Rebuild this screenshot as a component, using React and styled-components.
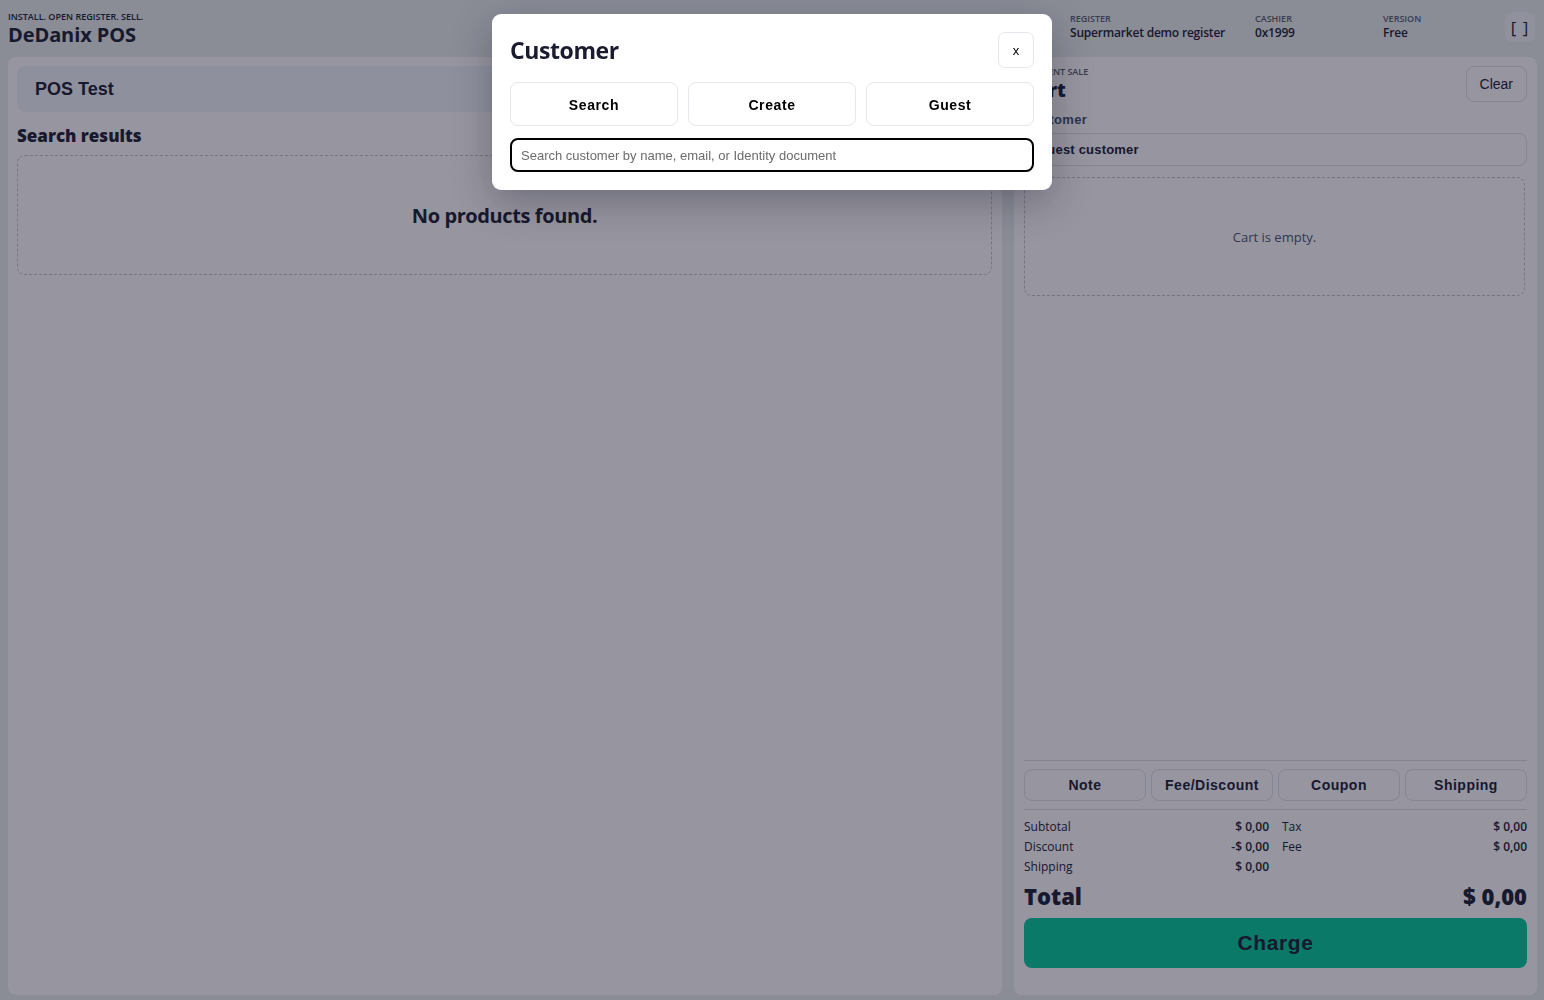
import React from "react";
import styled, { createGlobalStyle } from "styled-components";

const Global = createGlobalStyle`
  html, body { margin: 0; padding: 0; }
  body {
    background: #e3e7e9;
    font-family: "Open Sans", "Liberation Sans", sans-serif;
    color: #1e2235;
  }
  * { box-sizing: border-box; }
`;

const Shell = styled.div`
  height: 100vh;
  display: flex;
  flex-direction: column;
  overflow: hidden;
`;

const TopBar = styled.header`
  height: 57px;
  flex: none;
  display: flex;
  align-items: center;
  padding: 0 9px 0 8px;
`;

const Brand = styled.div`
  display: flex;
  flex-direction: column;
`;

const Tagline = styled.span`
  font-size: 9px;
  font-weight: 600;
  line-height: 12px;
  color: #1e2235;
`;

const BrandName = styled.span`
  font-size: 20px;
  font-weight: 700;
  line-height: 24px;
  color: #1e2235;
  letter-spacing: -0.1px;
`;

const Meta = styled.div`
  margin-left: auto;
  display: flex;
  align-items: center;
`;

const MetaItem = styled.div`
  width: ${(p) => p.$w}px;
  display: flex;
  flex-direction: column;
  margin-top: -4px;
`;

const MetaLabel = styled.span`
  font-size: 9px;
  font-weight: 600;
  text-transform: uppercase;
  color: #5a6070;
  line-height: 12px;
`;

const MetaValue = styled.span`
  font-size: 12px;
  font-weight: 600;
  color: #1e2235;
  line-height: 16px;
  letter-spacing: -0.2px;
`;

const IconButton = styled.button`
  width: 30px;
  height: 30px;
  margin-top: -3px;
  border: none;
  border-radius: 7px;
  background: #eeeff3;
  font-family: "Open Sans", sans-serif;
  font-size: 17px;
  color: #1e2235;
  padding: 0;
  display: flex;
  align-items: center;
  justify-content: center;
  letter-spacing: 1px;
`;

const Workspace = styled.main`
  flex: 1;
  min-height: 0;
  display: grid;
  grid-template-columns: 1fr 523px;
  gap: 12px;
  padding: 0 7px 5px 8px;
`;

const Panel = styled.section`
  background: #f9f7fa;
  border-radius: 8px;
  display: flex;
  flex-direction: column;
  padding: ${(p) => p.$pad};
  min-height: 0;
`;

const StoreBar = styled.div`
  height: 46px;
  border-radius: 8px;
  background: #eceef5;
  display: flex;
  align-items: center;
  padding: 0 18px;
  font-family: "Liberation Sans", Arial, sans-serif;
  font-weight: 700;
  font-size: 18px;
  color: #1e2235;
`;

const SectionTitle = styled.h2`
  margin: 12px 0 7px 0;
  font-size: 17px;
  font-weight: 800;
  line-height: 24px;
  color: #1e2235;
`;

const EmptyBox = styled.div`
  height: ${(p) => p.$h}px;
  border: 1px dashed #bfc2cc;
  border-radius: 8px;
  display: flex;
  align-items: center;
  justify-content: center;
  font-size: ${(p) => (p.$strong ? 20 : 13)}px;
  font-weight: ${(p) => (p.$strong ? 700 : 400)};
  color: ${(p) => (p.$strong ? "#1e2235" : "#4a5578")};
  letter-spacing: ${(p) => (p.$strong ? "-0.4px" : "0")};
`;

const CartHead = styled.div`
  display: flex;
  justify-content: space-between;
  align-items: flex-start;
`;

const CartTitles = styled.div`
  display: flex;
  flex-direction: column;
`;

const Eyebrow = styled.span`
  font-size: 9px;
  font-weight: 600;
  text-transform: uppercase;
  color: #5a6070;
  line-height: 12px;
`;

const CartTitle = styled.span`
  font-size: 19px;
  font-weight: 800;
  line-height: 24px;
  color: #1e2235;
`;

const OutlineButton = styled.button`
  height: ${(p) => p.$h}px;
  padding: 0 13px;
  border: 1px solid #dadce4;
  border-radius: 8px;
  background: transparent;
  font-family: "Liberation Sans", Arial, sans-serif;
  font-size: 14px;
  font-weight: ${(p) => (p.$bold ? 700 : 400)};
  letter-spacing: ${(p) => (p.$bold ? "0.5px" : "0")};
  color: #1e2235;
  cursor: pointer;
`;

const FieldLabel = styled.div`
  margin-top: 9px;
  font-family: "Liberation Sans", Arial, sans-serif;
  font-size: 13px;
  font-weight: 700;
  letter-spacing: 0.3px;
  color: #4a5068;
  line-height: 18px;
`;

const CustomerBox = styled.div`
  margin-top: 4px;
  height: 33px;
  border: 1px solid #dadce4;
  border-radius: 8px;
  display: flex;
  align-items: center;
  padding: 0 12px;
  font-family: "Liberation Sans", Arial, sans-serif;
  font-size: 13px;
  font-weight: 700;
  letter-spacing: 0.2px;
  color: #1e2235;
  margin-bottom: 11px;
`;

const CartArea = styled.div`
  margin-right: 2px;
`;

const Spacer = styled.div`
  flex: 1;
`;

const Divider = styled.hr`
  margin: 0;
  border: none;
  border-top: 1px solid #d6d8df;
`;

const ActionRow = styled.div`
  display: grid;
  grid-template-columns: repeat(4, 1fr);
  gap: 5px;
  padding: 8px 0;
`;

const Totals = styled.div`
  display: grid;
  grid-template-columns: 1fr 1fr;
  column-gap: 13px;
  padding-top: 6px;
`;

const TotalLine = styled.div`
  display: flex;
  justify-content: space-between;
  height: 20px;
  align-items: center;
  font-size: 12px;
`;

const TotalValue = styled.span`
  font-weight: 600;
`;

const GrandTotal = styled.div`
  display: flex;
  justify-content: space-between;
  align-items: center;
  height: 30px;
  margin-top: 5px;
  font-size: 22px;
  font-weight: 800;
  color: #1e2235;
`;

const ChargeButton = styled.button`
  margin-top: 7px;
  height: 50px;
  border: none;
  border-radius: 8px;
  background: #0ac699;
  font-family: "Liberation Sans", Arial, sans-serif;
  font-size: 21px;
  font-weight: 700;
  color: #1e2235;
  letter-spacing: 0.6px;
`;

const Backdrop = styled.div`
  position: fixed;
  inset: 0;
  background: rgba(15, 15, 35, 0.42);
`;

const Dialog = styled.div`
  position: fixed;
  top: 14px;
  left: 50%;
  transform: translateX(-50%);
  width: 560px;
  background: #ffffff;
  border-radius: 9px;
  padding: 18px;
  box-shadow: 0 12px 40px rgba(0, 0, 20, 0.28);
  display: flex;
  flex-direction: column;
`;

const DialogHead = styled.div`
  display: flex;
  justify-content: space-between;
  align-items: center;
`;

const DialogTitle = styled.h3`
  margin: 0;
  font-size: 23px;
  font-weight: 700;
  letter-spacing: -0.4px;
  color: #1a1b2e;
`;

const CloseButton = styled.button`
  width: 36px;
  height: 36px;
  border: 1px solid #e6e6ee;
  border-radius: 7px;
  background: #fff;
  font-family: "Liberation Sans", Arial, sans-serif;
  font-size: 13px;
  color: #000;
  padding: 0;
`;

const ModeTabs = styled.div`
  margin-top: 14px;
  display: grid;
  grid-template-columns: repeat(3, 1fr);
  gap: 10px;
`;

const ModeTab = styled.button`
  height: 44px;
  border: 1px solid #e6e6ee;
  border-radius: 8px;
  background: #fff;
  padding-top: 2px;
  font-family: "Liberation Sans", Arial, sans-serif;
  font-size: 14px;
  font-weight: 700;
  letter-spacing: 0.6px;
  color: #000;
`;

const SearchInput = styled.input`
  margin-top: 12px;
  height: 34px;
  border: 2px solid #000;
  border-radius: 8px;
  padding: 0 9px;
  font-family: "Liberation Sans", Arial, sans-serif;
  font-size: 13px;
  outline: none;
  &::placeholder { color: #6b6b6b; }
`;

const meta = [
  { label: "Register", value: "Supermarket demo register", w: 185 },
  { label: "Cashier", value: "0x1999", w: 128 },
  { label: "Version", value: "Free", w: 122 },
];

const actions = ["Note", "Fee/Discount", "Coupon", "Shipping"];

export default function App() {
  return (
    <>
      <Global />
      <Shell>
        <TopBar>
          <Brand>
            <Tagline>INSTALL. OPEN REGISTER. SELL.</Tagline>
            <BrandName>DeDanix POS</BrandName>
          </Brand>
          <Meta>
            {meta.map((m) => (
              <MetaItem key={m.label} $w={m.w}>
                <MetaLabel>{m.label}</MetaLabel>
                <MetaValue>{m.value}</MetaValue>
              </MetaItem>
            ))}
            <IconButton aria-label="Fullscreen">[ ]</IconButton>
          </Meta>
        </TopBar>

        <Workspace>
          <Panel $pad="9px 10px 10px 9px">
            <StoreBar>POS Test</StoreBar>
            <SectionTitle>Search results</SectionTitle>
            <EmptyBox $h={120} $strong>No products found.</EmptyBox>
          </Panel>

          <Panel $pad="9px 10px 27px 10px">
            <CartHead>
              <CartTitles>
                <Eyebrow>Current sale</Eyebrow>
                <CartTitle>Cart</CartTitle>
              </CartTitles>
              <OutlineButton $h={36}>Clear</OutlineButton>
            </CartHead>
            <FieldLabel>Customer</FieldLabel>
            <CustomerBox>Guest customer</CustomerBox>
            <CartArea>
              <EmptyBox $h={119}>Cart is empty.</EmptyBox>
            </CartArea>
            <Spacer />
            <Divider />
            <ActionRow>
              {actions.map((a) => (
                <OutlineButton key={a} $h={32} $bold>
                  {a}
                </OutlineButton>
              ))}
            </ActionRow>
            <Divider />
            <Totals>
              <TotalLine><span>Subtotal</span><TotalValue>$ 0,00</TotalValue></TotalLine>
              <TotalLine><span>Tax</span><TotalValue>$ 0,00</TotalValue></TotalLine>
              <TotalLine><span>Discount</span><TotalValue>-$ 0,00</TotalValue></TotalLine>
              <TotalLine><span>Fee</span><TotalValue>$ 0,00</TotalValue></TotalLine>
              <TotalLine><span>Shipping</span><TotalValue>$ 0,00</TotalValue></TotalLine>
            </Totals>
            <GrandTotal>
              <span>Total</span>
              <span>$ 0,00</span>
            </GrandTotal>
            <ChargeButton>Charge</ChargeButton>
          </Panel>
        </Workspace>
      </Shell>

      <Backdrop />
      <Dialog role="dialog" aria-label="Customer">
        <DialogHead>
          <DialogTitle>Customer</DialogTitle>
          <CloseButton>x</CloseButton>
        </DialogHead>
        <ModeTabs>
          <ModeTab>Search</ModeTab>
          <ModeTab>Create</ModeTab>
          <ModeTab>Guest</ModeTab>
        </ModeTabs>
        <SearchInput placeholder="Search customer by name, email, or Identity document" />
      </Dialog>
    </>
  );
}
